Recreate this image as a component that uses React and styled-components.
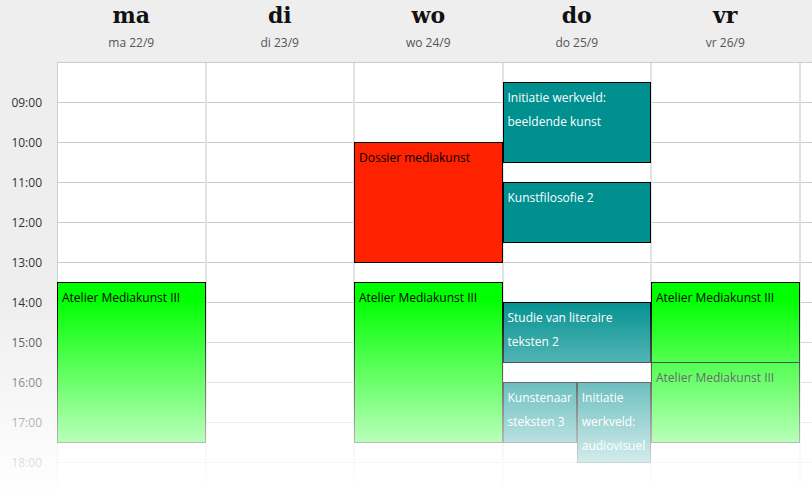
import React from "react"
import styled, { createGlobalStyle } from "styled-components"

const HOUR = 40
const START = 8
const COL_W = 148.5

const GlobalStyle = createGlobalStyle`
  html, body {
    margin: 0;
    padding: 0;
    background: #fff;
  }
  body {
    font-family: "Open Sans", "Noto Sans", sans-serif;
    overflow: hidden;
  }
`

const Page = styled.div`
  position: relative;
  width: 812px;
  height: 490px;
  overflow: hidden;
  background: #fff;
`

const Header = styled.div`
  display: flex;
  height: 62px;
  background: #eeeeee;
`

const Corner = styled.div`
  width: 57px;
  flex-shrink: 0;
`

const DayHead = styled.div`
  width: ${COL_W}px;
  flex-shrink: 0;
  display: flex;
  flex-direction: column;
  align-items: center;
`

const DayName = styled.div`
  font-family: "DejaVu Serif", "Liberation Serif", serif;
  font-weight: bold;
  font-size: 22px;
  line-height: 28px;
  color: #111;
  margin-top: 1px;
`

const DayDate = styled.div`
  font-size: 12px;
  line-height: 16px;
  color: #555;
  margin-top: 6px;
`

const Body = styled.div`
  display: flex;
  height: 428px;
`

const TimeColumn = styled.div`
  width: 57px;
  flex-shrink: 0;
  background: #eeeeee;
  padding-top: 21px;
  box-sizing: border-box;
`

const TimeLabel = styled.div`
  height: ${HOUR}px;
  line-height: ${HOUR}px;
  font-size: 12px;
  color: #333;
  text-align: right;
  padding-right: 15px;
`

const Grid = styled.div`
  display: flex;
  border-top: 1px solid #cccccc;
  box-shadow: inset 1px 0 0 #cccccc;
  flex: 1;
`

const DayColumn = styled.div`
  position: relative;
  width: ${COL_W}px;
  flex-shrink: 0;
  background-image: repeating-linear-gradient(
    to bottom,
    transparent 0,
    transparent ${HOUR - 1}px,
    #cccccc ${HOUR - 1}px,
    #cccccc ${HOUR}px
  );

  &::after {
    content: "";
    position: absolute;
    top: 0;
    bottom: 0;
    right: -1px;
    width: 2px;
    background: #e2e2e2;
    z-index: 1;
  }
`

const palette = {
  green: { bg: "#00ff00", fg: "#000" },
  red: { bg: "#ff2200", fg: "#000" },
  teal: { bg: "#009090", fg: "#fff" },
}

const Event = styled.div`
  position: absolute;
  z-index: 2;
  box-sizing: border-box;
  border: 1px solid #000;
  background: ${(p) => palette[p.$kind].bg};
  color: ${(p) => palette[p.$kind].fg};
  font-size: 12px;
  line-height: 24px;
  padding: 3px 4px;
  overflow: hidden;
`

const Fade = styled.div`
  position: absolute;
  left: 0;
  right: 0;
  top: 298px;
  bottom: 0;
  pointer-events: none;
  z-index: 5;
  background: linear-gradient(to bottom, rgba(255, 255, 255, 0), rgba(255, 255, 255, 0.97));
`

const days = [
  { name: "ma", date: "ma 22/9" },
  { name: "di", date: "di 23/9" },
  { name: "wo", date: "wo 24/9" },
  { name: "do", date: "do 25/9" },
  { name: "vr", date: "vr 26/9" },
  { name: "za" },
]

const events = [
  { day: 0, from: 13.5, to: 17.5, kind: "green", title: "Atelier Mediakunst III" },
  { day: 2, from: 10, to: 13, kind: "red", title: "Dossier mediakunst" },
  { day: 2, from: 13.5, to: 17.5, kind: "green", title: "Atelier Mediakunst III" },
  { day: 3, from: 8.5, to: 10.5, kind: "teal", title: "Initiatie werkveld: beeldende kunst" },
  { day: 3, from: 11, to: 12.5, kind: "teal", title: "Kunstfilosofie 2" },
  { day: 3, from: 14, to: 15.5, kind: "teal", title: "Studie van literaire teksten 2" },
  { day: 3, from: 16, to: 17.5, kind: "teal", title: "Kunstenaar steksten 3", half: 0 },
  { day: 3, from: 16, to: 18, kind: "teal", title: "Initiatie werkveld: audiovisuel", half: 1 },
  { day: 4, from: 13.5, to: 15.5, kind: "green", title: "Atelier Mediakunst III" },
  { day: 4, from: 15.5, to: 17.5, kind: "green", title: "Atelier Mediakunst III" },
]

const hours = ["09:00", "10:00", "11:00", "12:00", "13:00", "14:00", "15:00", "16:00", "17:00", "18:00"]

function eventStyle(ev) {
  const style = {
    top: (ev.from - START) * HOUR - 1,
    height: (ev.to - ev.from) * HOUR + 1,
  }
  if (ev.half === undefined) {
    style.left = 0
    style.right = 0
  } else {
    style.left = ev.half === 0 ? 0 : "50%"
    style.width = "50%"
  }
  return style
}

export default function App() {
  return (
    <Page>
      <GlobalStyle />
      <Header>
        <Corner />
        {days.map((d) => (
          <DayHead key={d.name}>
            {d.date && (
              <>
                <DayName>{d.name}</DayName>
                <DayDate>{d.date}</DayDate>
              </>
            )}
          </DayHead>
        ))}
      </Header>
      <Body>
        <TimeColumn>
          {hours.map((h) => (
            <TimeLabel key={h}>{h}</TimeLabel>
          ))}
        </TimeColumn>
        <Grid>
          {days.map((d, i) => (
            <DayColumn key={d.name}>
              {events
                .filter((ev) => ev.day === i)
                .map((ev, j) => (
                  <Event key={j} $kind={ev.kind} style={eventStyle(ev)}>
                    {ev.title}
                  </Event>
                ))}
            </DayColumn>
          ))}
        </Grid>
      </Body>
      <Fade />
    </Page>
  )
}
